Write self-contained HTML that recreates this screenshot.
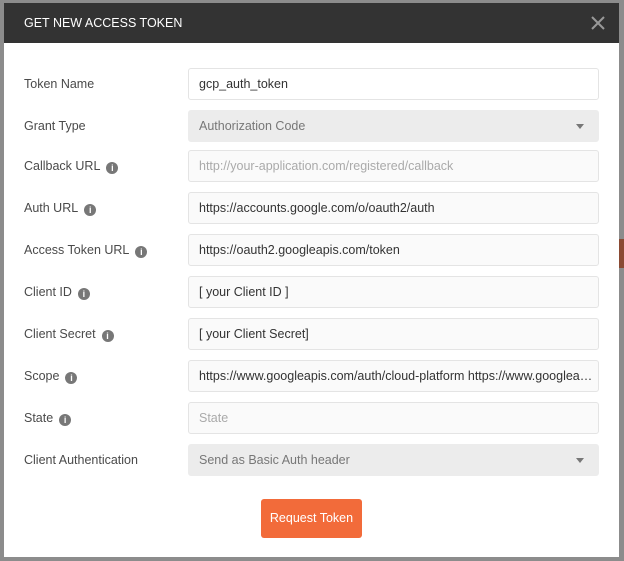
<!DOCTYPE html>
<html><head><style>
body{margin:0;width:624px;height:561px;background:#8c8c8c;font-family:"Liberation Sans",sans-serif;position:relative;overflow:hidden}
.m{position:absolute;left:4px;top:3px;width:615px;height:554px;background:#fff}
.h{height:40px;background:#333;color:#fff;font-size:12.5px;line-height:40px;padding-left:20px}
.x{position:absolute;right:13px;top:12px;width:16px;height:16px}
.row{position:absolute;left:0;width:615px;height:32px}
.l{position:absolute;left:20px;top:0;line-height:33px;font-size:12.5px;color:#4a4a4a}
.i{display:inline-block;width:12px;height:12px;border-radius:50%;background:#777;color:#fff;font-size:9px;line-height:12px;text-align:center;font-weight:bold;margin-left:6px;vertical-align:-1px}
.f{position:absolute;left:184px;top:0;height:30px;border:1px solid #e4e4e4;border-radius:3px;background:#fafafa;font-size:12.5px;line-height:30px;padding-left:10px;color:#333;box-sizing:content-box;white-space:nowrap;overflow:hidden;text-overflow:ellipsis;width:399px}
.f.w{background:#fff}
.f.p{color:#aaa}
.f.s{background:#ececec;border-color:#ececec;color:#777}
.f.s:after{content:"";position:absolute;right:14px;top:13px;border:4px solid transparent;border-top:5px solid #777}
.b{position:absolute;left:257px;top:496px;width:101px;height:39px;background:#f26b3a;border-radius:3px;color:#fff;font-size:12.5px;line-height:39px;text-align:center}
</style></head><body>
<div style="position:absolute;right:0;top:239px;width:5px;height:29px;background:#8a4a33"></div>
<div class="m">
<div class="h">GET NEW ACCESS TOKEN</div>
<svg class="x" viewBox="0 0 16 16"><path d="M2 2L14 14M14 2L2 14" stroke="#999" stroke-width="2"/></svg>
<div class="row" style="top:65px"><div class="l">Token Name</div><div class="f w">gcp_auth_token</div></div>
<div class="row" style="top:107px"><div class="l">Grant Type</div><div class="f s">Authorization Code</div></div>
<div class="row" style="top:147px"><div class="l">Callback URL<span class="i">i</span></div><div class="f p">http://your-application.com/registered/callback</div></div>
<div class="row" style="top:189px"><div class="l">Auth URL<span class="i">i</span></div><div class="f">https://accounts.google.com/o/oauth2/auth</div></div>
<div class="row" style="top:231px"><div class="l">Access Token URL<span class="i">i</span></div><div class="f">https://oauth2.googleapis.com/token</div></div>
<div class="row" style="top:273px"><div class="l">Client ID<span class="i">i</span></div><div class="f">[ your Client ID ]</div></div>
<div class="row" style="top:315px"><div class="l">Client Secret<span class="i">i</span></div><div class="f">[ your Client Secret]</div></div>
<div class="row" style="top:357px"><div class="l">Scope<span class="i">i</span></div><div class="f">https://www.googleapis.com/auth/cloud-platform https://www.googleapis.com/auth/userinfo</div></div>
<div class="row" style="top:399px"><div class="l">State<span class="i">i</span></div><div class="f p">State</div></div>
<div class="row" style="top:441px"><div class="l">Client Authentication</div><div class="f s">Send as Basic Auth header</div></div>
<div class="b">Request Token</div>
</div>
</body></html>
